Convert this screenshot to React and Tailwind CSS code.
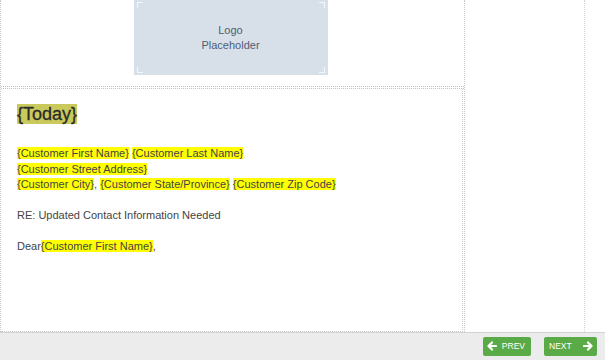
import React from 'react'

const hl = 'bg-[#ffff00]'

function Corner({ pos }) {
  return <span className={`absolute w-[6px] h-[6px] border-[#f4f7fa] ${pos}`} />
}

function Arrow({ dir }) {
  return <svg width="10" height="10" viewBox="0 0 10 10" className="shrink-0">
    {dir === 'left'
      ? <path d="M9 5H2M5 1.5L1.5 5L5 8.5" stroke="white" strokeWidth="2.2" fill="none" strokeLinecap="round" strokeLinejoin="round" />
      : <path d="M1 5H8M5 1.5L8.5 5L5 8.5" stroke="white" strokeWidth="2.2" fill="none" strokeLinecap="round" strokeLinejoin="round" />}
  </svg>
}

function App() {
  return <div className="w-[605px] h-[360px] flex flex-col bg-white overflow-hidden" style={{ fontFamily: '"Liberation Sans", Arial, sans-serif' }}>
    <div className="flex h-[332px]">
      <div className="w-[465px] flex flex-col border-l border-r border-dotted border-[#c9c9c9]">
        <div className="h-[86px] flex justify-center">
          <div className="relative w-[194px] h-[75px] ml-[-4px] bg-[#d7e0e8] flex flex-col items-center justify-center text-[11px] leading-[15px] text-[#4f5d73]">
            <Corner pos="top-[2px] left-[3px] border-t border-l" />
            <Corner pos="top-[2px] right-[3px] border-t border-r" />
            <Corner pos="bottom-[2px] left-[3px] border-b border-l" />
            <Corner pos="bottom-[2px] right-[3px] border-b border-r" />
            <span>Logo</span>
            <span>Placeholder</span>
          </div>
        </div>
        <div className="h-[3px] border-y border-dotted border-[#c2c2c2]" />
        <div className="flex-1 mr-[1px] border-r border-b border-dotted border-[#c9c9c9] pl-[16px] pt-[15px] text-[11px] leading-[15.5px] text-[#444]">
          <div className="text-[18px] leading-[20px] text-[#2a2a2a]" style={{ WebkitTextStroke: '0.3px #2a2a2a' }}>
            <span className="bg-[#c9c95c]">{'{Today}'}</span>
          </div>
          <div className="mt-[22px]">
            <div><span className={hl}>{'{Customer First Name}'}</span> <span className={hl}>{'{Customer Last Name}'}</span></div>
            <div><span className={hl}>{'{Customer Street Address}'}</span></div>
            <div><span className={hl}>{'{Customer City}'}</span>, <span className={hl}>{'{Customer State/Province}'}</span> <span className={hl}>{'{Customer Zip Code}'}</span></div>
          </div>
          <div className="mt-[15.5px]">RE: Updated Contact Information Needed</div>
          <div className="mt-[15.5px]">Dear<span className={hl}>{'{Customer First Name}'}</span>,</div>
        </div>
      </div>
      <div className="w-[120px] border-r border-dotted border-[#d4d4d4]" />
    </div>
    <div className="flex-1 bg-[#ececec] border-t border-[#d2d2d2] flex items-center justify-end gap-[13px] pr-[8px] pb-[1px]">
      <button className="w-[48px] h-[19px] rounded-[2px] bg-[#5aab47] text-white text-[8.5px] flex items-center justify-between pl-[4px] pr-[6px]">
        <Arrow dir="left" />
        <span>PREV</span>
      </button>
      <button className="w-[53px] h-[19px] rounded-[2px] bg-[#5aab47] text-white text-[8.5px] flex items-center justify-between pl-[5px] pr-[4px]">
        <span>NEXT</span>
        <Arrow dir="right" />
      </button>
    </div>
  </div>
}

export default App
